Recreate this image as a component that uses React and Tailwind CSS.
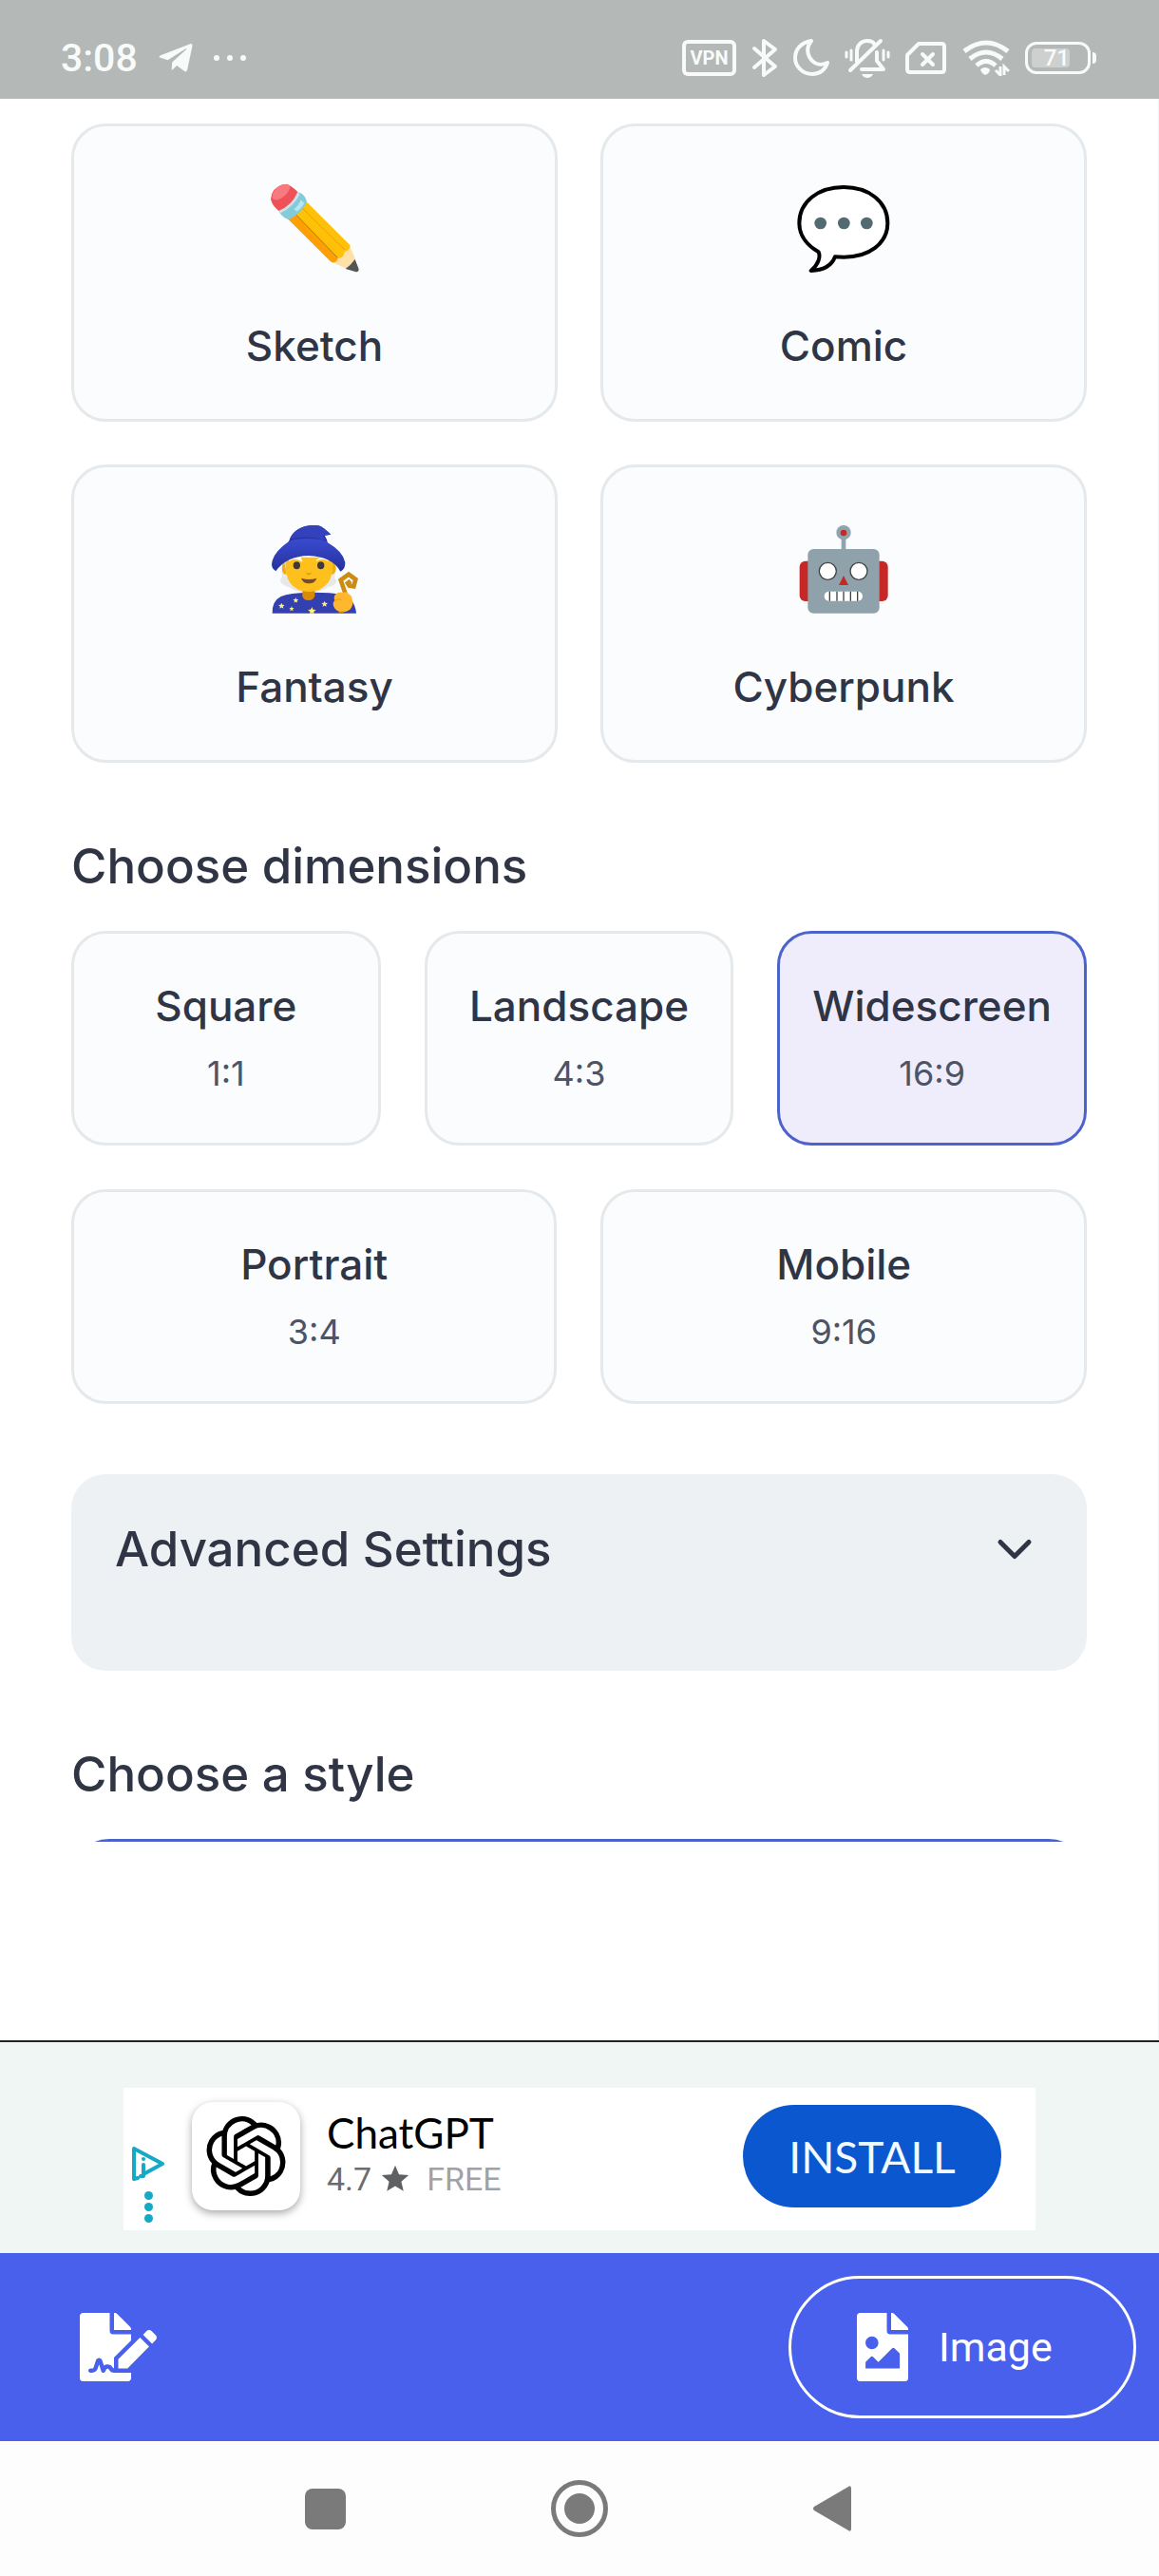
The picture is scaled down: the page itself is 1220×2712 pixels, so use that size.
import { useState } from "react";
import { ChevronDown } from "lucide-react";
import { FaFileImage, FaFileSignature, FaTelegramPlane } from "react-icons/fa";
import { MdStar } from "react-icons/md";
import { SiOpenai } from "react-icons/si";

const PencilArt = () => (
  <svg viewBox="126 96 288 288" className="size-24 overflow-visible" aria-hidden="true">
    <path d="M188 213 246 158 382 294Q386 304 378 316L344 349Q332 354 322 346Z" fill="#ffc107" />
    <path d="M188 213 208 194 343 334 340 349Q328 352 320 345Z" fill="#ff9f06" />
    <path d="M208 194 343 334" stroke="#b9770e" strokeWidth="3" />
    <path d="M233 179 366 309" stroke="#f29a0d" strokeWidth="3" />
    <path d="M382 298 400 340 370 368 328 349Q343 349 344 336 364 334 365 314 378 316 382 298Z" fill="#ffe0a6" />
    <path d="M398 339 410 370Q410 380 401 379L368 369Q384 358 398 339Z" fill="#555" />
    <path d="M157 187Q196 170 217 127 239 130 246 157 234 192 188 214 168 207 157 187Z" fill="#84cbd9" />
    <path d="M160 190Q200 172 221 130" stroke="#cfdfe5" strokeWidth="8" fill="none" />
    <path d="M206 180Q220 170 227 151L238 161Q231 176 214 188Z" fill="#b8e6ee" />
    <path d="M157 186Q136 168 132 149 136 112 170 103 188 96 217 126 199 169 157 186Z" fill="#ee5157" />
    <path d="M138 148Q133 118 170 103 184 98 193 106 192 129 169 144 151 156 138 148Z" fill="#f77b7e" />
  </svg>
);

const BubbleArt = () => (
  <svg viewBox="148 96 288 288" className="size-24 overflow-visible" aria-hidden="true">
    <path
      d="M292 111C212 111 152 157 152 225 152 267 181 298 213 316 220 332 212 355 189 375 227 374 254 360 265 331 275 332 284 332 293 332 372 332 431 289 431 225 431 157 372 111 292 111Z"
      fill="#fff"
      stroke="#000"
      strokeWidth="12"
      strokeLinejoin="round"
    />
    <circle cx="219" cy="225" r="19" fill="#546a71" />
    <circle cx="293" cy="225" r="19" fill="#546a71" />
    <circle cx="365" cy="225" r="19" fill="#546a71" />
  </svg>
);

const STARS = [
  [166, 324, 10],
  [211, 306, 9],
  [198, 333, 8],
  [262, 340, 13],
  [302, 318, 10],
];

const WizardArt = () => (
  <svg viewBox="126 63 288 288" className="size-24 overflow-visible" aria-hidden="true">
    <defs>
      <linearGradient id="hatShade" x1="0" y1="0" x2="0" y2="1">
        <stop offset="0" stopColor="#3a4bd0" />
        <stop offset="1" stopColor="#26309c" />
      </linearGradient>
      <clipPath id="robeClip">
        <rect x="130" y="270" width="280" height="77" />
      </clipPath>
    </defs>
    <path d="M178 175Q162 196 168 232 158 240 165 252 178 262 190 264 214 284 252 280 294 282 312 264 336 262 342 244 330 240 336 218 344 196 326 176Z" fill="#e8e8ea" />
    <path d="M137 347Q136 308 164 294 192 282 252 281 322 280 352 288 398 298 402 347Z" fill="#3440b0" />
    <path d="M232 270H271V292Q268 306 251 306 234 306 232 292Z" fill="#d98b08" />
    <path d="M175 182Q166 192 168 212 172 226 182 224M327 182Q340 192 337 212 332 226 324 224" fill="#f0ad10" />
    <path d="M179 170H328Q330 224 314 250 290 280 252 279 212 279 192 250 176 224 179 170Z" fill="#fdc01c" />
    <path d="M190 181Q206 168 229 181L226 173Q204 166 190 181ZM276 181Q294 168 315 181 296 164 276 181Z" stroke="#fff" strokeWidth="4" fill="#fff" />
    <ellipse cx="214" cy="196" rx="11" ry="12" fill="#403a36" />
    <ellipse cx="290" cy="196" rx="11" ry="12" fill="#403a36" />
    <path d="M244 217Q252 224 261 217 260 226 252 226 245 226 244 217Z" fill="#e39a12" />
    <path d="M228 236Q252 244 277 236 272 253 252 253 234 253 228 236Z" fill="#7a4a2e" />
    <path d="M188 124C200 82 236 66 274 69 292 70 302 80 322 98L300 102 308 124Z" fill="#2f3cb4" />
    <path d="M148 214Q130 204 137 181 144 152 188 121 196 112 252 111 304 112 312 124 360 152 367 186 368 208 352 215 326 168 252 165 182 166 148 214Z" fill="url(#hatShade)" />
    <path d="M188 122Q196 110 250 111 302 111 312 125 300 76 250 76 206 82 188 122Z" fill="#2934a4" />
    <path d="M192 112C204 82 236 68 274 69 292 70 302 80 322 98L296 102 306 116Q248 100 192 112Z" fill="#3341bd" />
    <g clipPath="url(#robeClip)">
      {STARS.map(([x, y, r]) => (
        <path
          key={x}
          transform={`translate(${x} ${y}) scale(${r})`}
          d="M0-1 .28-.36 1-.3 .44.14 .6.84 0 .48-.6.84-.44.14-1-.3-.28-.36Z"
          fill="#fff176"
        />
      ))}
    </g>
    <path d="M370 292 353 242 378 224 400 240 394 262 380 260 375 252 384 245" stroke="#cc8c12" strokeWidth="14" fill="none" />
    <path d="M340 284Q352 278 360 282 372 276 378 286 390 292 389 304 394 318 386 330 380 342 358 343 338 342 331 326 326 314 334 306 328 292 340 284Z" fill="#ffb72e" />
    <path d="M334 307Q344 300 356 304" stroke="#ef9a1a" strokeWidth="3" fill="none" />
    <path d="M345 341H365L361 347H349Z" fill="#c98508" />
  </svg>
);

const RobotArt = () => (
  <svg viewBox="148 63 288 288" className="size-24 overflow-visible" aria-hidden="true">
    <rect x="153" y="182" width="50" height="127" rx="18" fill="#c62828" />
    <rect x="382" y="182" width="50" height="127" rx="18" fill="#c62828" />
    <circle cx="292" cy="92" r="23" fill="#90a4ae" />
    <rect x="285" y="104" width="14" height="46" fill="#90a4ae" />
    <circle cx="292" cy="93" r="10" fill="#c62828" />
    <rect x="179" y="144" width="226" height="203" rx="18" fill="#8fa2ac" />
    <circle cx="242" cy="214" r="27" fill="#fff" stroke="#424242" strokeWidth="4" />
    <circle cx="340" cy="214" r="27" fill="#fff" stroke="#424242" strokeWidth="4" />
    <path d="M292 228 307 258H277Z" fill="#c62828" />
    <rect x="231" y="278" width="121" height="30" rx="15" fill="#fff" />
    <path d="M248 278V308M271 278V308M292 278V308M314 278V308M336 278V308" stroke="#424242" strokeWidth="4" />
  </svg>
);

const styles = [
  { name: "Sketch", Art: PencilArt },
  { name: "Comic", Art: BubbleArt },
  { name: "Fantasy", Art: WizardArt },
  { name: "Cyberpunk", Art: RobotArt },
];

const dimensions = [
  { name: "Square", ratio: "1:1", span: "col-span-2" },
  { name: "Landscape", ratio: "4:3", span: "col-span-2" },
  { name: "Widescreen", ratio: "16:9", span: "col-span-2" },
  { name: "Portrait", ratio: "3:4", span: "col-span-3" },
  { name: "Mobile", ratio: "9:16", span: "col-span-3" },
];

const StatusBar = () => (
  <header className="flex h-26 items-center justify-between bg-[#b4b8b7] pt-[18px] pr-[66px] pl-16 text-[#f8fbfa]">
    <div className="flex items-center">
      <span className="font-[Roboto,sans-serif] text-[41px] leading-10 font-medium">3:08</span>
      <FaTelegramPlane className="ml-5 size-10" />
      <span className="ml-5 flex gap-2">
        <i className="size-1.5 rounded-full bg-current" />
        <i className="size-1.5 rounded-full bg-current" />
        <i className="size-1.5 rounded-full bg-current" />
      </span>
    </div>

    <div className="flex items-center gap-4">
      <span className="flex h-[38px] w-[57px] items-center justify-center rounded-md border-4 border-current font-[Roboto,sans-serif] text-xl leading-5 font-bold">
        VPN
      </span>
      <svg viewBox="0 0 28 42" className="h-[42px] w-7" fill="none" stroke="currentColor" strokeWidth="4" strokeLinecap="round" strokeLinejoin="round">
        <path d="M3 11 25 30 13 39V3L25 12 3 31" />
      </svg>
      <svg viewBox="0 0 38 40" className="h-10 w-[38px]" fill="none" stroke="currentColor" strokeWidth="4" strokeLinejoin="round">
        <path d="M19 2C8 4 2 11 2 20S10 37 20 37C28 37 34 32 36 25 28 29 21 26 17 19 14 13 15 7 19 2Z" />
      </svg>
      <svg viewBox="0 0 48 42" className="h-[42px] w-12" fill="none" stroke="currentColor" strokeWidth="4" strokeLinecap="round">
        <path d="M6 34 38 3M13 25V15C13 7 18 3 24 3 27 3 30 4 31 6M34 15V24L41 33H18" strokeLinejoin="round" />
        <path d="M2 15V20M7 13V23M41 13V23M46 15V20" strokeWidth="3" />
        <path d="M18 38H30Q28 42 24 42T18 38Z" fill="currentColor" stroke="none" />
      </svg>
      <svg viewBox="0 0 44 36" className="h-9 w-11" fill="none" stroke="currentColor" strokeWidth="4" strokeLinejoin="round">
        <path d="M14 3H38Q41 3 41 6V30Q41 33 38 33H5Q2 33 2 30V15Z" />
        <path d="M18 14 29 25M29 14 18 25" strokeLinecap="round" />
      </svg>
      <svg viewBox="0 0 50 38" className="h-[38px] w-[50px]" fill="none" stroke="currentColor" strokeWidth="5">
        <path d="M2 12Q25-6 48 12M8 20Q25 6 42 20M15 27Q25 18 35 27" />
        <path d="M19 31Q24 27 29 31 29 35 24 37 20 35 19 31Z" fill="currentColor" stroke="none" />
        <path d="M40 28V37L35 32M44 37V28L49 33" strokeWidth="3" />
      </svg>
      <span className="flex items-center gap-0.5">
        <span className="flex h-[34px] w-[69px] items-center rounded-xl border-[3px] border-current px-1">
          <span className="flex h-5 w-10 items-center justify-end rounded-sm bg-[#cdd0cf] font-[Roboto,sans-serif] text-2xl leading-5 font-medium">
            71
          </span>
        </span>
        <i className="h-3 w-1 rounded-r-sm bg-current" />
      </span>
    </div>
  </header>
);

const AdBanner = () => (
  <aside className="border-t-2 border-[#222] bg-[#f0f6f4] px-[130px] pt-12 pb-6">
    <div className="flex h-[150px] items-center bg-white pr-9 pb-1.5 pl-2">
      <div className="flex w-9 flex-col items-center gap-2.5 self-end pb-0.5 text-[#14a9c4]">
        <svg viewBox="0 0 36 38" className="h-[38px] w-9" fill="none" stroke="currentColor" strokeWidth="4" strokeLinejoin="round" strokeLinecap="round" role="img" aria-label="AdChoices">
          <path d="M7 34 3 35V3L33 19 13 30M13 20V32H10" />
          <circle cx="13" cy="14" r="2" fill="currentColor" stroke="none" />
        </svg>
        <button type="button" aria-label="Ad options" className="flex flex-col gap-[3px]">
          <i className="size-[9px] rounded-full bg-current" />
          <i className="size-[9px] rounded-full bg-current" />
          <i className="size-[9px] rounded-full bg-current" />
        </button>
      </div>
      <div className="ml-7 flex size-[114px] items-center justify-center rounded-[22px] bg-white shadow-[0_3px_8px_rgba(0,0,0,0.35)]">
        <SiOpenai className="size-[84px] text-black" />
      </div>
      <div className="ml-7 flex-1 font-[Roboto,sans-serif]">
        <p className="font-[Lato,sans-serif] text-[44px] leading-[48px] text-black">ChatGPT</p>
        <p className="flex items-center text-[34px] leading-[50px] text-[#6b6c6e]">
          4.7
          <MdStar className="ml-2 size-[34px] text-[#5f6062]" />
          <span className="ml-4 text-[#9fa2a6]">FREE</span>
        </p>
      </div>
      <button type="button" className="h-[108px] w-[272px] rounded-full bg-[#0b57d0] font-[Lato,sans-serif] text-[46px] text-[#f2faff]">
        INSTALL
      </button>
    </div>
  </aside>
);

const App = () => {
  const [style, setStyle] = useState(null);
  const [dimension, setDimension] = useState("Widescreen");
  const [advancedOpen, setAdvancedOpen] = useState(false);

  const cardTone = (active) =>
    active ? "border-[#4c63cc] bg-[#efedfc]" : "border-[#e5e9eb] bg-[#fafcfd]";

  return (
    <div className="flex min-h-screen flex-col bg-white font-[Inter,sans-serif] text-[#2f3545]">
      <StatusBar />

      <main className="flex-1 border-r border-[#f0f3f3] pt-[26px] pr-[75px] pl-[75px]">
        <div className="grid grid-cols-2 gap-[45px]">
          {styles.map(({ name, Art }) => (
            <button
              key={name}
              type="button"
              aria-pressed={style === name}
              onClick={() => setStyle(name)}
              className={`flex flex-col items-center rounded-[36px] border-[3px] pt-[59px] pb-[47px] ${cardTone(style === name)}`}
            >
              <Art />
              <span className="mt-[46px] text-[44px] leading-[60px] font-medium">{name}</span>
            </button>
          ))}
        </div>

        <h2 className="mt-[79px] mb-[38px] text-[51px] leading-[60px] font-medium">Choose dimensions</h2>
        <div className="grid grid-cols-6 gap-[46px]">
          {dimensions.map(({ name, ratio, span }) => (
            <button
              key={name}
              type="button"
              aria-pressed={dimension === name}
              onClick={() => setDimension(name)}
              className={`flex flex-col items-center gap-[17px] rounded-[36px] border-[3px] pt-[46px] pb-[49px] ${span} ${cardTone(dimension === name)}`}
            >
              <span className="text-[44px] leading-[60px] font-medium">{name}</span>
              <span className="text-[36px] leading-[48px] text-[#4d5464]">{ratio}</span>
            </button>
          ))}
        </div>

        <section className="mt-[74px] rounded-[36px] bg-[#edf1f4] px-[46px] pt-[49px] pb-[98px]">
          <button
            type="button"
            aria-expanded={advancedOpen}
            onClick={() => setAdvancedOpen(!advancedOpen)}
            className="flex w-full items-center justify-between text-[51px] leading-[60px] font-medium"
          >
            Advanced Settings
            <ChevronDown className="size-[60px]" strokeWidth={2} />
          </button>
        </section>

        <h2 className="mt-[79px] mb-[38px] text-[51px] leading-[60px] font-medium">Choose a style</h2>
        <div className="h-[3px] overflow-hidden">
          <div className="h-24 rounded-[40px] border-[3px] border-[#4c63cc]" />
        </div>
      </main>

      <AdBanner />

      <nav className="flex items-center justify-between bg-[#4860eb] py-6 pr-6 pl-[84px] text-white">
        <button type="button" aria-label="Text">
          <FaFileSignature className="h-[72px] w-[81px]" />
        </button>
        <button type="button" className="flex h-[150px] w-[366px] items-center gap-8 rounded-full border-[3px] border-white pl-[69px] font-[Roboto,sans-serif] text-[43px]">
          <FaFileImage className="h-[72px] w-[54px]" />
          Image
        </button>
      </nav>

      <footer className="grid h-[142px] grid-cols-[1fr_60px_1fr] items-center gap-[216px] bg-[#fdfdfd] text-[#7a7a7a]">
        <button type="button" aria-label="Recent apps" className="size-[43px] justify-self-end rounded-lg bg-current" />
        <button type="button" aria-label="Home" className="flex size-[60px] items-center justify-center rounded-full border-[5px] border-current">
          <i className="size-8 rounded-full bg-current" />
        </button>
        <button type="button" aria-label="Back">
          <svg viewBox="0 0 40 48" className="h-12 w-10" fill="currentColor">
            <path d="M37 1Q40-1 40 3V45Q40 49 37 47L1 26Q-1 24 1 22Z" />
          </svg>
        </button>
      </footer>
    </div>
  );
};

export default App;
